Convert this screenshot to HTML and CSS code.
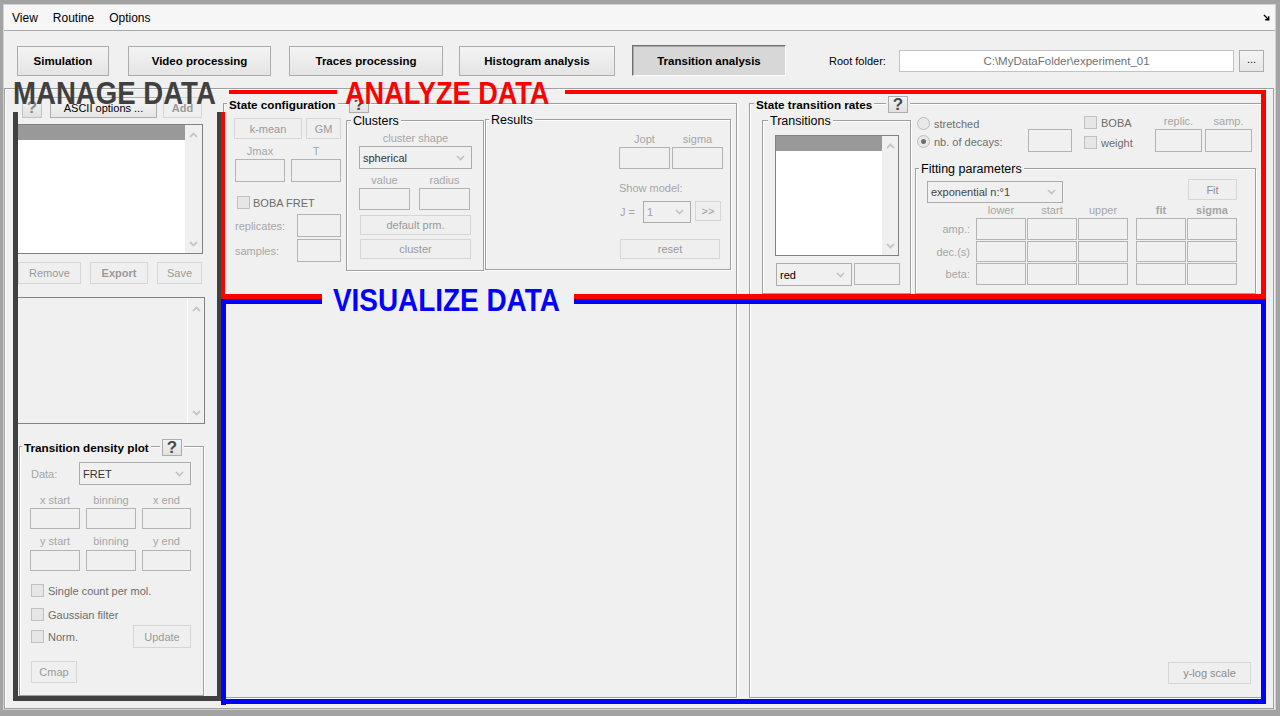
FILE: index.html
```html
<!DOCTYPE html>
<html lang="en">
<head>
<meta charset="utf-8">
<title>Transition analysis</title>
<link rel="stylesheet" href="styles.css">
</head>
<body>
<div class="app">
  <div class="menubar">
    <span>View</span>
    <span>Routine</span>
    <span>Options</span>
    <svg class="dock" viewBox="0 0 8 8"><path d="M1 1 L6.5 6.5 M6.5 2.5 V6.5 H2.5"/></svg>
  </div>

  <div class="tabs">
    <div class="tab t1">Simulation</div>
    <div class="tab t2">Video processing</div>
    <div class="tab t3">Traces processing</div>
    <div class="tab t4">Histogram analysis</div>
    <div class="tab t5 active">Transition analysis</div>
    <div class="root">
      <span class="root-label">Root folder:</span>
      <div class="root-input">C:\MyDataFolder\experiment_01</div>
      <div class="btn on dots">...</div>
    </div>
  </div>

  <div class="main">
    <!-- MANAGE DATA column -->
    <div class="manage">
      <div class="m-top">
        <div class="btn help help-dim">?</div>
        <div class="btn on ascii">ASCII options ...</div>
        <div class="btn bold add">Add</div>
      </div>
      <div class="listbox lb1">
        <div class="lb-body"><div class="lb-sel"></div></div>
        <div class="sbar">
          <svg viewBox="0 0 9 6"><polyline points="1,5 4.5,1.5 8,5"/></svg>
          <svg viewBox="0 0 9 6"><polyline points="1,1 4.5,4.5 8,1"/></svg>
        </div>
      </div>
      <div class="m-btns">
        <div class="btn b-remove">Remove</div>
        <div class="btn bold b-export">Export</div>
        <div class="btn b-save">Save</div>
      </div>
      <div class="listbox lb2">
        <div class="lb-body"></div>
        <div class="sbar">
          <svg viewBox="0 0 9 6"><polyline points="1,5 4.5,1.5 8,5"/></svg>
          <svg viewBox="0 0 9 6"><polyline points="1,1 4.5,4.5 8,1"/></svg>
        </div>
      </div>
      <div class="panel tdp">
        <div class="ptitle t-tdp"><span class="pt">Transition density plot</span><span class="hw"><span class="btn help">?</span></span></div>
        <div class="tdp-data">
          <span class="lab data-lab">Data:</span>
          <div class="popup p-fret"><span>FRET</span><svg class="dd" viewBox="0 0 9 6"><polyline points="1,1 4.5,4.5 8,1"/></svg></div>
        </div>
        <div class="trio trio-lab tl1"><span>x start</span><span>binning</span><span>x end</span></div>
        <div class="trio ti1"><div class="edit"></div><div class="edit"></div><div class="edit"></div></div>
        <div class="trio trio-lab tl2"><span>y start</span><span>binning</span><span>y end</span></div>
        <div class="trio ti2"><div class="edit"></div><div class="edit"></div><div class="edit"></div></div>
        <div class="check tdp-c1"><span class="cb"></span><span>Single count per mol.</span></div>
        <div class="check tdp-c2"><span class="cb"></span><span>Gaussian filter</span></div>
        <div class="check tdp-c3"><span class="cb"></span><span>Norm.</span><div class="btn b-update">Update</div></div>
        <div class="btn b-cmap">Cmap</div>
      </div>
    </div>

    <!-- State configuration -->
    <div class="panel sc">
      <div class="ptitle t-sc"><span class="pt">State configuration</span><span class="hw"><span class="btn help">?</span></span></div>
      <div class="sc-row">
        <div class="sc-left">
          <div class="sc-btns"><div class="btn b-kmean">k-mean</div><div class="btn b-gm">GM</div></div>
          <div class="pair-lab"><span>Jmax</span><span>T</span></div>
          <div class="pair-in"><div class="edit"></div><div class="edit"></div></div>
          <div class="check boba"><span class="cb"></span><span>BOBA FRET</span></div>
          <div class="kv kv1"><span class="lab">replicates:</span><div class="edit"></div></div>
          <div class="kv kv2"><span class="lab">samples:</span><div class="edit"></div></div>
        </div>

        <div class="panel clusters">
          <div class="ptitle sub t-cl"><span class="pt">Clusters</span></div>
          <span class="lab cl-shape">cluster shape</span>
          <div class="popup p-sph"><span>spherical</span><svg class="dd" viewBox="0 0 9 6"><polyline points="1,1 4.5,4.5 8,1"/></svg></div>
          <div class="cl-vr-lab"><span>value</span><span>radius</span></div>
          <div class="cl-vr"><div class="edit"></div><div class="edit"></div></div>
          <div class="btn b-def">default prm.</div>
          <div class="btn b-clu">cluster</div>
        </div>

        <div class="panel results">
          <div class="ptitle sub t-res"><span class="pt">Results</span></div>
          <div class="res-lab"><span>Jopt</span><span>sigma</span></div>
          <div class="res-in"><div class="edit"></div><div class="edit"></div></div>
          <span class="lab show">Show model:</span>
          <div class="jrow">
            <span class="lab jlab">J =</span>
            <div class="popup p-j"><span>1</span><svg class="dd" viewBox="0 0 9 6"><polyline points="1,1 4.5,4.5 8,1"/></svg></div>
            <div class="btn b-next">&gt;&gt;</div>
          </div>
          <div class="btn b-reset">reset</div>
        </div>
      </div>
    </div>

    <!-- State transition rates -->
    <div class="panel rates">
      <div class="ptitle t-rates"><span class="pt">State transition rates</span><span class="hw"><span class="btn help">?</span></span></div>
      <div class="r-top">
        <div class="panel trans">
          <div class="ptitle sub t-trans"><span class="pt">Transitions</span></div>
          <div class="listbox lb3">
            <div class="lb-body"><div class="lb-sel"></div></div>
            <div class="sbar">
              <svg viewBox="0 0 9 6"><polyline points="1,5 4.5,1.5 8,5"/></svg>
              <svg viewBox="0 0 9 6"><polyline points="1,1 4.5,4.5 8,1"/></svg>
            </div>
          </div>
          <div class="trans-bot">
            <div class="popup p-red"><span>red</span><svg class="dd" viewBox="0 0 9 6"><polyline points="1,1 4.5,4.5 8,1"/></svg></div>
            <div class="edit e-red"></div>
          </div>
        </div>

        <div class="r-right">
          <div class="r-opts">
            <div class="radios">
              <div class="check"><span class="radio"></span><span>stretched</span></div>
              <div class="check"><span class="radio on"></span><span>nb. of decays:</span></div>
            </div>
            <div class="edit e-decays"></div>
            <div class="cbs">
              <div class="check"><span class="cb"></span><span>BOBA</span></div>
              <div class="check"><span class="cb"></span><span>weight</span></div>
            </div>
            <div class="rs">
              <div class="rs-col"><span class="lab">replic.</span><div class="edit"></div></div>
              <div class="rs-col"><span class="lab">samp.</span><div class="edit"></div></div>
            </div>
          </div>

          <div class="panel fitp">
            <div class="ptitle sub t-fit"><span class="pt">Fitting parameters</span></div>
            <div class="fit-row">
              <div class="popup p-exp"><span>exponential n:°1</span><svg class="dd" viewBox="0 0 9 6"><polyline points="1,1 4.5,4.5 8,1"/></svg></div>
              <div class="btn b-fit">Fit</div>
            </div>
            <div class="fgrid">
              <span></span><span class="lab hd">lower</span><span class="lab hd">start</span><span class="lab hd">upper</span><span></span><span class="lab hd bold">fit</span><span class="lab hd bold">sigma</span>
              <span class="lab rl">amp.:</span><div class="edit"></div><div class="edit"></div><div class="edit"></div><span></span><div class="edit"></div><div class="edit"></div>
              <span class="lab rl">dec.(s)</span><div class="edit"></div><div class="edit"></div><div class="edit"></div><span></span><div class="edit"></div><div class="edit"></div>
              <span class="lab rl">beta:</span><div class="edit"></div><div class="edit"></div><div class="edit"></div><span></span><div class="edit"></div><div class="edit"></div>
            </div>
          </div>
        </div>
      </div>
      <div class="btn b-ylog">y-log scale</div>
    </div>
  </div>
</div>

<!-- annotation overlay -->
<div class="annot">
  <div class="ln dk dk-l"></div>
  <div class="ln dk dk-r"></div>
  <div class="ln dk dk-b"></div>
  <div class="ln rd rd-t1"></div>
  <div class="ln rd rd-t2"></div>
  <div class="ln rd rd-l"></div>
  <div class="ln rd rd-r"></div>
  <div class="ln rd rd-b1"></div>
  <div class="ln rd rd-b2"></div>
  <div class="ln bl bl-t1"></div>
  <div class="ln bl bl-t2"></div>
  <div class="ln bl bl-l"></div>
  <div class="ln bl bl-r"></div>
  <div class="ln bl bl-b"></div>
  <div class="big lb-manage">MANAGE DATA</div>
  <div class="big lb-analyze">ANALYZE DATA</div>
  <div class="big lb-visualize">VISUALIZE DATA</div>
</div>
</body>
</html>
```

FILE: styles.css
```css
* { box-sizing: border-box; margin: 0; padding: 0; }
html, body { width: 1280px; height: 716px; overflow: hidden; }
body {
  background: #a3a3a3;
  font-family: "Liberation Sans", Arial, sans-serif;
  font-size: 11px;
  color: #000;
  position: relative;
}

/* ---------- window ---------- */
.app {
  margin: 4px 0 0 3px;
  width: 1273px;
  height: 706px;
  border: 1px solid #d2d2d2;
  background: #f0f0f0;
  display: flex;
  flex-direction: column;
}
.menubar {
  flex: none;
  height: 26px;
  background: #f6f6f6;
  border-bottom: 1px solid #a9a9a9;
  display: flex;
  align-items: center;
  gap: 15px;
  padding-left: 8px;
  font-size: 12px;
}
.dock { width: 7px; height: 7px; margin: 0 5px 0 auto; fill: none; stroke: #000; stroke-width: 1.6; }

.tabs {
  flex: none;
  height: 57px;
  display: flex;
  align-items: flex-start;
  padding: 15px 0 0 13px;
}
.tab {
  flex: none;
  height: 30px;
  border: 1px solid #acacac;
  background: linear-gradient(#f4f4f4, #e4e4e4);
  font-weight: bold;
  font-size: 11.5px;
  display: flex;
  align-items: center;
  justify-content: center;
}
.t1 { width: 92px; }
.t2 { width: 143px; margin-left: 19px; }
.t3 { width: 154px; margin-left: 18px; }
.t4 { width: 156px; margin-left: 16px; }
.t5 { width: 154px; margin-left: 17px; }
.tab.active {
  height: 31px;
  margin-top: -1px;
  background: #d7d7d7;
  border-color: #707070 #fdfdfd #fdfdfd #707070;
  box-shadow: inset 1px 1px 0 #a8a8a8;
}
.root { display: flex; align-items: center; margin: 4px 0 0 43px; height: 22px; }
.root-label { width: 70px; }
.root-input {
  width: 335px; height: 22px;
  border: 1px solid #c3c3c3; background: #fff;
  color: #707070; font-size: 11.5px;
  display: flex; align-items: center; justify-content: center;
}
.dots { width: 25px; height: 22px; margin-left: 5px; color: #555; align-items: flex-end; padding-bottom: 4px; }

/* ---------- generic widgets ---------- */
.btn {
  flex: none;
  display: flex; align-items: center; justify-content: center;
  border: 1px solid #d6d6d6;
  background: #efefef;
  color: #9a9a9a;
  white-space: nowrap;
}
.btn.on { border-color: #adadad; background: linear-gradient(#f5f5f5, #e6e6e6); color: #000; }
.bold { font-weight: bold; }
.help {
  width: 20px; height: 17px;
  border-color: #adadad;
  background: linear-gradient(#f3f3f3, #e1e1e1);
  color: #4a4a4a;
  font-weight: bold; font-size: 17px; line-height: 1;
}
.help-dim { width: 20px; height: 21px; color: #8c8c8c; border-color: #c4c4c4; }

.edit { flex: none; border: 1px solid #b4b4b4; background: #f0f0f0; }
.popup {
  flex: none;
  display: flex; align-items: center;
  border: 1px solid #acacac; background: #f0f0f0;
  padding-left: 3px; color: #333;
}
.dd { width: 9px; height: 6px; margin: 0 6px 0 auto; fill: none; stroke: #c2c2c2; stroke-width: 1.6; }

.lab { color: #a6a6a6; white-space: nowrap; }
.check { display: flex; align-items: center; gap: 4px; color: #6d6d6d; white-space: nowrap; }
.cb { flex: none; width: 13px; height: 13px; border: 1px solid #c0c0c0; background: #e6e6e6; }
.radio {
  flex: none; width: 13px; height: 13px; border-radius: 50%;
  border: 1px solid #bdbdbd; background: #e8e8e8;
  display: flex; align-items: center; justify-content: center;
}
.radio.on::after { content: ""; width: 5px; height: 5px; border-radius: 50%; background: #6e6e6e; }

.listbox { flex: none; display: flex; border: 1px solid #828282; background: #fff; }
.lb-body { flex: 1; }
.lb-sel { height: 15px; background: #999; }
.sbar {
  width: 17px; background: #f0f0f0;
  display: flex; flex-direction: column; align-items: center; justify-content: space-between;
  padding: 7px 0 6px;
}
.sbar svg { width: 9px; height: 6px; fill: none; stroke: #c6c6c6; stroke-width: 1.8; }

/* ---------- panels ---------- */
.panel {
  flex: none;
  display: flex; flex-direction: column; align-items: flex-start;
  border: 1px solid #a0a0a0;
  box-shadow: inset 1px 1px 0 #fff, 1px 1px 0 #fff;
}
.ptitle {
  display: flex; align-items: center;
  height: 18px; margin-top: -9px;
  font-weight: bold; font-size: 11.7px;
}
.ptitle .pt { background: #f0f0f0; padding: 0 2px; white-space: nowrap; }
.ptitle .hw { background: #f0f0f0; padding: 0 2px; margin-left: auto; }
.ptitle.sub { height: 16px; margin-top: -8px; font-weight: normal; font-size: 12.5px; }

/* ---------- main ---------- */
.main {
  flex: 1;
  margin-right: 1px;
  border: 1px solid #a0a0a0;
  box-shadow: inset 1px 1px 0 #fff;
  display: flex;
  align-items: flex-start;
}

/* manage column */
.manage { flex: none; width: 218px; display: flex; flex-direction: column; align-items: flex-start; }
.m-top { display: flex; margin: 8px 0 0 17px; height: 21px; }
.ascii { width: 107px; height: 21px; margin-left: 8px; }
.add { width: 39px; height: 21px; margin-left: 6px; }
.lb1 { width: 186px; height: 130px; margin: 6px 0 0 12px; }
.m-btns { display: flex; margin: 8px 0 0 13px; }
.m-btns .btn { height: 22px; }
.b-remove { width: 63px; }
.b-export { width: 58px; margin-left: 9px; }
.b-save { width: 45px; margin-left: 9px; }
.lb2 { width: 188px; height: 127px; margin: 13px 0 0 12px; background: #f0f0f0; }
.lb2 .sbar { border-left: 1px solid #fff; padding: 8px 0 7px; }

.tdp { width: 185px; height: 250px; margin: 22px 0 0 14px; }
.t-tdp { margin-left: 2px; width: 162px; }
.tdp-data { display: flex; align-items: center; margin: 6px 0 0 11px; }
.data-lab { width: 48px; }
.p-fret { width: 112px; height: 23px; }
.trio { display: grid; grid-template-columns: 50px 50px 49px; column-gap: 6px; margin-left: 10px; }
.trio-lab span { color: #a6a6a6; text-align: center; height: 14px; line-height: 14px; }
.trio .edit { height: 21px; }
.tl1 { margin-top: 8px; }
.ti1 { margin-top: 1px; }
.tl2 { margin-top: 5px; }
.ti2 { margin-top: 2px; }
.tdp-c1 { margin: 13px 0 0 11px; height: 13px; }
.tdp-c2 { margin: 11px 0 0 11px; height: 13px; }
.tdp-c3 { margin: 4px 0 0 11px; height: 23px; align-self: stretch; padding-right: 12px; }
.b-update { width: 58px; height: 23px; margin-left: auto; }
.b-cmap { width: 46px; height: 22px; margin: 13px 0 0 11px; }

/* state configuration */
.sc { width: 514px; height: 595px; margin-top: 14px; }
.t-sc { margin-left: 3px; width: 144px; }
.sc-row { display: flex; align-items: flex-start; margin-top: 5px; padding-left: 10px; }
.sc-left { flex: none; width: 107px; display: flex; flex-direction: column; }
.sc-btns { display: flex; gap: 4px; }
.b-kmean { width: 68px; height: 21px; }
.b-gm { width: 35px; height: 21px; }
.pair-lab { display: flex; gap: 6px; padding-left: 1px; margin-top: 5px; }
.pair-lab span { width: 50px; height: 14px; line-height: 14px; text-align: center; color: #a6a6a6; }
.pair-in { display: flex; gap: 6px; padding-left: 1px; margin-top: 1px; }
.pair-in .edit { width: 50px; height: 23px; }
.boba { margin: 14px 0 0 3px; height: 13px; gap: 3px; }
.kv { display: flex; align-items: center; padding-left: 1px; }
.kv .edit { width: 44px; height: 23px; margin-left: auto; }
.kv1 { margin-top: 5px; }
.kv2 { margin-top: 2px; }

.clusters { width: 138px; height: 151px; margin: 2px 0 0 5px; }
.t-cl { margin-left: 4px; }
.cl-shape { width: 113px; height: 14px; line-height: 14px; text-align: center; margin: 2px 0 0 12px; }
.p-sph { width: 113px; height: 23px; margin: 1px 0 0 12px; }
.cl-vr-lab { display: flex; gap: 9px; margin: 4px 0 0 12px; }
.cl-vr-lab span { width: 51px; height: 14px; line-height: 14px; text-align: center; color: #a6a6a6; }
.cl-vr { display: flex; gap: 9px; margin: 1px 0 0 12px; }
.cl-vr .edit { width: 51px; height: 22px; }
.b-def { width: 111px; height: 20px; margin: 5px 0 0 13px; }
.b-clu { width: 111px; height: 20px; margin: 4px 0 0 13px; }

.results { width: 246px; height: 151px; margin: 1px 0 0 1px; }
.t-res { margin-left: 3px; }
.res-lab { display: flex; gap: 2px; margin: 4px 0 0 133px; }
.res-lab span { width: 51px; height: 14px; line-height: 14px; text-align: center; color: #a6a6a6; }
.res-in { display: flex; gap: 2px; margin: 1px 0 0 133px; }
.res-in .edit { width: 51px; height: 22px; }
.show { height: 14px; line-height: 14px; margin: 12px 0 0 133px; }
.jrow { display: flex; align-items: flex-start; margin: 6px 0 0 134px; }
.jlab { width: 23px; height: 22px; line-height: 22px; }
.p-j { width: 48px; height: 22px; color: #a0a0a0; }
.b-next { width: 26px; height: 20px; margin-left: 4px; }
.b-reset { width: 100px; height: 20px; margin: 16px 0 0 134px; }

/* state transition rates */
.rates { width: 514px; height: 595px; margin: 14px 0 0 12px; }
.t-rates { margin-left: 4px; width: 156px; }
.r-top { display: flex; align-items: flex-start; margin-top: 3px; padding-left: 12px; }
.trans { width: 149px; height: 174px; margin-top: 4px; }
.t-trans { margin-left: 5px; }
.lb3 { width: 124px; height: 121px; margin: 6px 0 0 12px; }
.lb3 .sbar { width: 16px; }
.trans-bot { display: flex; align-items: flex-start; margin: 7px 0 0 13px; }
.p-red { width: 76px; height: 23px; color: #000; }
.e-red { width: 46px; height: 22px; margin-left: 2px; }

.r-right { flex: none; width: 341px; margin-left: 4px; display: flex; flex-direction: column; }
.r-opts { display: flex; align-items: flex-start; height: 36px; }
.radios { flex: none; width: 111px; margin: 1px 0 0 2px; display: flex; flex-direction: column; gap: 5px; }
.radios .check { height: 13px; }
.e-decays { width: 44px; height: 23px; margin-top: 13px; }
.cbs { flex: none; width: 71px; margin-left: 12px; display: flex; flex-direction: column; gap: 7px; }
.cbs .check { height: 13px; }
.rs { display: flex; gap: 3px; }
.rs-col { display: flex; flex-direction: column; width: 47px; }
.rs-col .lab { height: 13px; line-height: 11px; text-align: center; }
.rs-col .edit { height: 23px; }

.fitp { width: 341px; height: 126px; margin-top: 16px; }
.t-fit { margin-left: 3px; }
.fit-row { display: flex; align-items: flex-start; margin-top: 2px; }
.p-exp { width: 136px; height: 22px; margin: 2px 0 0 11px; color: #444; }
.b-fit { width: 49px; height: 21px; margin-left: 125px; color: #8e8e8e; }
.fgrid {
  display: grid;
  grid-template-columns: 59px 50px 50px 50px 6px 50px 50px;
  grid-template-rows: 14px 22px 21px 22px;
  column-gap: 1px;
  row-gap: 1px;
}
.fgrid .hd { text-align: center; line-height: 14px; }
.fgrid .rl { text-align: right; padding-right: 5px; align-self: center; }
.b-ylog { width: 83px; height: 22px; margin: auto 11px 13px auto; align-self: flex-end; color: #8c8c8c; }

/* ---------- annotation overlay ---------- */
.annot { position: absolute; left: 0; top: 0; width: 1280px; height: 716px; pointer-events: none; }
.ln { position: absolute; }
.dk { background: #404040; }
.rd { background: #ff0000; }
.bl { background: #0000ff; }
.dk-l { left: 13px; top: 112px; width: 5px; height: 589px; }
.dk-r { left: 217px; top: 112px; width: 4px; height: 589px; }
.dk-b { left: 13px; top: 696px; width: 208px; height: 5px; }
.rd-t1 { left: 229px; top: 90px; width: 108px; height: 4px; }
.rd-t2 { left: 565px; top: 90px; width: 701px; height: 4px; }
.rd-l { left: 221px; top: 112px; width: 4px; height: 187px; }
.rd-r { left: 1261px; top: 90px; width: 5px; height: 209px; }
.rd-b1 { left: 221px; top: 294px; width: 101px; height: 5px; }
.rd-b2 { left: 574px; top: 294px; width: 692px; height: 5px; }
.bl-t1 { left: 221px; top: 299px; width: 101px; height: 5px; }
.bl-t2 { left: 574px; top: 299px; width: 692px; height: 5px; }
.bl-l { left: 221px; top: 299px; width: 5px; height: 406px; }
.bl-r { left: 1261px; top: 299px; width: 5px; height: 405px; }
.bl-b { left: 221px; top: 699px; width: 1045px; height: 5px; }

.big {
  position: absolute;
  font-family: "Liberation Sans", Arial, sans-serif;
  font-weight: bold;
  font-size: 31px;
  line-height: 31px;
  white-space: nowrap;
  transform-origin: 0 0;
}
.lb-manage { left: 13px; top: 78px; color: #404040; transform: scaleX(0.89); }
.lb-analyze {
  left: 345px; top: 78px; height: 22px; padding-right: 8px;
  color: #ff0000; transform: scaleX(0.875);
  background: linear-gradient(transparent 11px, #f0f0f0 11px);
}
.lb-visualize { left: 333px; top: 285px; color: #0000ff; transform: scaleX(0.9); }
```
